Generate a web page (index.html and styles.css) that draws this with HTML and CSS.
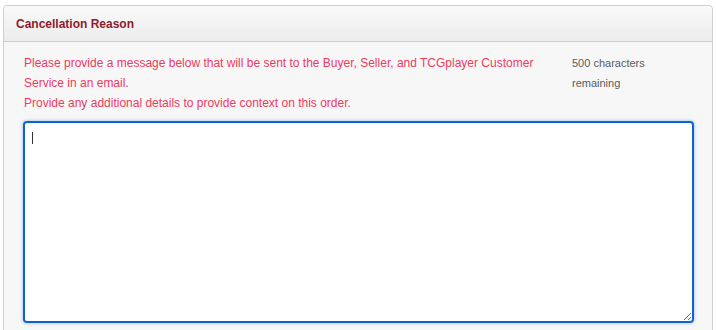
FILE: index.html
```html
<!DOCTYPE html>
<html>
<head>
<meta charset="utf-8">
<link rel="stylesheet" href="styles.css">
</head>
<body>
<div class="panel">
  <div class="panel-heading">Cancellation Reason</div>
  <div class="panel-body">
    <div class="info">
      <div class="msg">
        <p>Please provide a message below that will be sent to the Buyer, Seller, and TCGplayer Customer Service in an email.</p>
        <p>Provide any additional details to provide context on this order.</p>
      </div>
      <div class="count">500 characters remaining</div>
    </div>
    <div class="field">
      <textarea class="reason" autofocus></textarea>
      <span class="caret"></span>
    </div>
  </div>
</div>
</body>
</html>
```
FILE: styles.css
```css
html, body {
  margin: 0;
  padding: 0;
  background: #ffffff;
  font-family: "Liberation Sans", Arial, sans-serif;
}
.panel {
  margin: 5px 3px 0 3px;
  border: 1px solid #cfcfcf;
  border-radius: 4px;
  background: #f7f7f7;
  height: 340px;
  box-sizing: border-box;
}
.panel-heading {
  height: 36px;
  box-sizing: border-box;
  padding: 10px 12px 0 12px;
  font-size: 12px;
  font-weight: bold;
  line-height: 16px;
  color: #8e1b2c;
  background: linear-gradient(#f9f9f9, #ececec);
  border-bottom: 1px solid #cccccc;
  border-radius: 4px 4px 0 0;
}
.panel-body {
  padding: 11px 19px 0 20px;
}
.info {
  display: flex;
  gap: 28px;
}
.msg {
  width: 520px;
  color: #ee3a5f;
  font-size: 12px;
  line-height: 20px;
}
.msg p {
  margin: 0;
}
.count {
  width: 88px;
  color: #5a5a5a;
  font-size: 11px;
  line-height: 20px;
}
.field {
  position: relative;
  margin-top: 9px;
}
.reason {
  display: block;
  width: 100%;
  height: 200px;
  box-sizing: border-box;
  border: 1px solid #0b63d1;
  border-radius: 3px;
  box-shadow: 0 0 0 1px #0b63d1, 0 0 3px 2px rgba(80, 140, 230, 0.35);
  outline: none;
  background: #ffffff;
  padding: 8px 7px;
  font-family: "Liberation Sans", Arial, sans-serif;
  font-size: 12px;
  resize: vertical;
  caret-color: transparent;
}
.caret {
  position: absolute;
  left: 8px;
  top: 10px;
  width: 1px;
  height: 12px;
  background: #333333;
}
```
